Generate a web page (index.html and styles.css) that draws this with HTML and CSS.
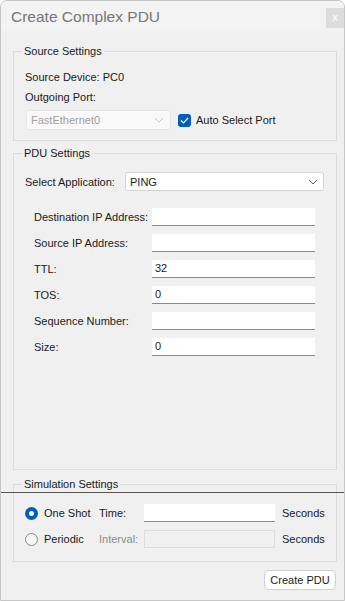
FILE: index.html
```html
<!DOCTYPE html>
<html>
<head>
<meta charset="utf-8">
<link rel="stylesheet" href="styles.css">
</head>
<body>
<div class="window">
  <div class="titlebar">
    <span class="title">Create Complex PDU</span>
    <span class="close">x</span>
  </div>
  <div class="content">
    <fieldset class="group source">
      <legend>Source Settings</legend>
      <div class="line">Source Device: PC0</div>
      <div class="line line2">Outgoing Port:</div>
      <div class="portrow">
        <div class="combo disabled">
          <span>FastEthernet0</span>
          <svg class="chev" width="10" height="6" viewBox="0 0 10 6"><path d="M1 1 L5 5 L9 1" fill="none" stroke="#c8c8c8" stroke-width="1"/></svg>
        </div>
        <span class="check"><svg width="9" height="7" viewBox="0 0 9 7"><path d="M1 3.5 L3.5 6 L8 1" fill="none" stroke="#fff" stroke-width="1.2"/></svg></span>
        <span class="checklabel">Auto Select Port</span>
      </div>
    </fieldset>

    <fieldset class="group pdu">
      <legend>PDU Settings</legend>
      <div class="approw">
        <span class="applabel">Select Application:</span>
        <div class="combo app">
          <span>PING</span>
          <svg class="chev" width="10" height="6" viewBox="0 0 10 6"><path d="M1 1 L5 5 L9 1" fill="none" stroke="#606060" stroke-width="1"/></svg>
        </div>
      </div>
      <div class="fields">
        <div class="field"><span class="flabel">Destination IP Address:</span><div class="input"></div></div>
        <div class="field"><span class="flabel">Source IP Address:</span><div class="input"></div></div>
        <div class="field"><span class="flabel">TTL:</span><div class="input">32</div></div>
        <div class="field"><span class="flabel">TOS:</span><div class="input">0</div></div>
        <div class="field"><span class="flabel">Sequence Number:</span><div class="input"></div></div>
        <div class="field"><span class="flabel">Size:</span><div class="input">0</div></div>
      </div>
    </fieldset>

    <fieldset class="group sim">
      <legend>Simulation Settings</legend>
      <div class="simrow">
        <span class="radio on"></span>
        <span class="rlabel">One Shot</span>
        <span class="slabel">Time:</span>
        <div class="input sinput"></div>
        <span class="unit">Seconds</span>
      </div>
      <div class="simrow">
        <span class="radio"></span>
        <span class="rlabel">Periodic</span>
        <span class="slabel dis">Interval:</span>
        <div class="input sinput disabledin"></div>
        <span class="unit">Seconds</span>
      </div>
    </fieldset>

    <div class="actions">
      <button class="btn">Create PDU</button>
    </div>
  </div>
  <div class="hline"></div>
</div>
</body>
</html>
```

FILE: styles.css
```css
* { box-sizing: border-box; }
html, body { margin: 0; padding: 0; background: #ffffff; }
body {
  font-family: "Liberation Sans", Arial, sans-serif;
  font-size: 11px;
  color: #1a1a1a;
}
.window {
  position: relative;
  width: 345px;
  height: 601px;
  border: 1px solid #c6c6c6;
  border-radius: 7px 7px 0 0;
  background: #f0f0f0;
  overflow: hidden;
}
.titlebar {
  height: 30px;
  background: #f3f3f3;
  display: flex;
  align-items: flex-start;
  justify-content: space-between;
}
.title {
  font-size: 15.5px;
  color: #777777;
  padding-left: 10px;
  line-height: 31px;
}
.close {
  margin-top: 7px;
  width: 18px;
  height: 20px;
  background: #dddddd;
  color: #ffffff;
  font-size: 11px;
  line-height: 19px;
  text-align: center;
}
.content {
  padding: 0 7px 0 12px;
}
.group {
  margin: 0;
  border: 1px solid #dcdcdc;
  padding: 0 11px;
  min-width: 0;
}
.group legend {
  padding: 0 2px;
  margin-left: -3px;
  line-height: 14px;
  font-size: 11px;
  color: #1a1a1a;
}
.source {
  margin-top: 13px;
  padding-top: 12px;
  padding-bottom: 10px;
}
.line { line-height: 14px; }
.line2 { margin-top: 6px; }
.portrow {
  margin-top: 6px;
  display: flex;
  align-items: center;
}
.combo {
  height: 20px;
  display: flex;
  align-items: center;
  justify-content: space-between;
  padding: 0 6px 0 4px;
}
.combo.disabled {
  width: 145px;
  margin-left: 1px;
  background: #f9f9f9;
  border: 1px solid #e6e6e6;
  color: #a0a0a0;
  border-radius: 2px;
}
.check {
  margin-left: 7px;
  width: 13px;
  height: 13px;
  border-radius: 3px;
  background: #005fb8;
  display: flex;
  align-items: center;
  justify-content: center;
}
.checklabel { margin-left: 5px; }

.pdu {
  margin-top: 5px;
  padding-top: 12px;
  padding-bottom: 113px;
}
.approw {
  display: flex;
  align-items: center;
}
.applabel { width: 100px; }
.combo.app {
  width: 199px;
  height: 19px;
  background: #ffffff;
  border: 1px solid #d4d4d4;
  border-radius: 2px;
  padding-right: 5px;
}
.fields {
  margin-top: 17px;
  padding-left: 9px;
  display: flex;
  flex-direction: column;
  gap: 8px;
}
.field {
  display: flex;
  align-items: center;
  height: 18px;
}
.flabel { width: 118px; }
.input {
  width: 163px;
  height: 18px;
  background: #ffffff;
  border-bottom: 1px solid #8a8a8a;
  line-height: 17px;
  padding-left: 3px;
}

.sim {
  margin-top: 7px;
  padding-top: 13px;
  padding-bottom: 13px;
}
.simrow {
  display: flex;
  align-items: center;
  height: 18px;
}
.simrow + .simrow { margin-top: 8px; }
.radio {
  width: 13px;
  height: 13px;
  border-radius: 50%;
  border: 1px solid #8a8a8a;
  background: #f7f7f7;
}
.radio.on {
  border: 4px solid #005fb8;
  background: #ffffff;
}
.rlabel { margin-left: 6px; width: 55px; }
.slabel { width: 45px; }
.slabel.dis { color: #8c8c8c; }
.sinput { width: 131px; }
.disabledin {
  background: #f0f0f0;
  border: 1px solid #dedede;
}
.unit { margin-left: 7px; }

.actions {
  display: flex;
  justify-content: flex-end;
  margin-top: 8px;
  padding-right: 1px;
}
.btn {
  font-family: inherit;
  font-size: 11px;
  color: #1a1a1a;
  background: #ffffff;
  border: 1px solid #d0d0d0;
  border-radius: 4px;
  width: 72px;
  height: 20px;
  padding: 0;
}
.hline {
  position: absolute;
  left: 0;
  right: 0;
  top: 491px;
  height: 1px;
  background: #555555;
}
```
